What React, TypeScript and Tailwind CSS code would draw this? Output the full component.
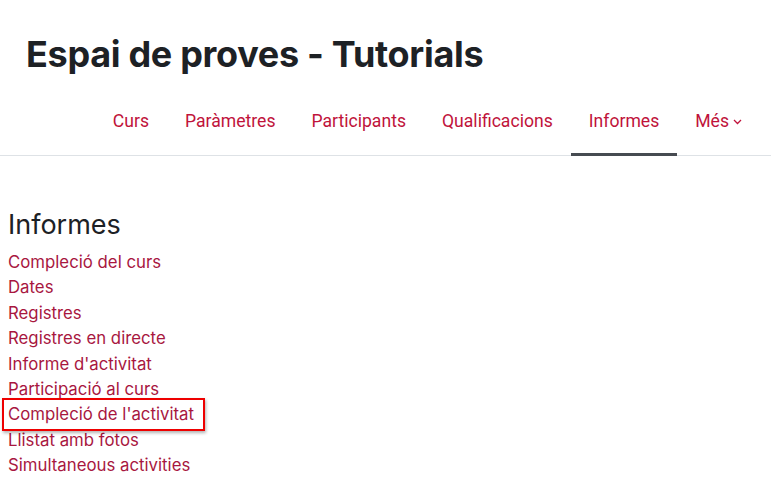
const tabs = ['Curs', 'Paràmetres', 'Participants', 'Qualificacions', 'Informes'];

const reports = [
  'Compleció del curs',
  'Dates',
  'Registres',
  'Registres en directe',
  "Informe d'activitat",
  'Participació al curs',
  "Compleció de l'activitat",
  'Llistat amb fotos',
  'Simultaneous activities',
];

export default function App() {
  return (
    <div className="w-[771px] h-[487px] bg-white overflow-hidden">
      {/* Header */}
      <div className="pl-[26px] pt-[30px]">
        <h1 className="text-[36px] leading-[48px] font-bold tracking-[-0.3px] text-[#1d2125] [font-family:Inter,sans-serif]">
          Espai de proves - Tutorials
        </h1>
      </div>

      {/* Secondary nav */}
      <nav className="mt-[19px] border-b border-[#dee2e6] flex justify-end pr-[13px]">
        {tabs.map((t) => (
          <a
            key={t}
            className={`px-[18px] h-[59px] pt-[12px] leading-[24px] text-[17.6px] text-[#c0133b] [font-family:Roboto,sans-serif] border-b-[3px] -mb-px ${
              t === 'Informes' ? 'border-[#464b51]' : 'border-transparent'
            }`}
          >
            {t}
          </a>
        ))}
        <a className="pl-[18px] pr-[16px] h-[59px] pt-[12px] leading-[24px] flex items-start gap-[4px] text-[17.6px] text-[#c0133b] [font-family:Roboto,sans-serif] border-b-[3px] border-transparent -mb-px">
          Més
          <svg className="mt-[10px]" width="9" height="6" viewBox="0 0 9 6" fill="none" stroke="#c0133b" strokeWidth="1.3">
            <path d="M1 1l3.5 3.5L8 1" />
          </svg>
        </a>
      </nav>

      {/* Content */}
      <div className="pl-[8px] pt-[51px] [font-family:Inter,sans-serif]">
        <h2 className="text-[27px] leading-[36px] text-[#1d2125] font-normal mb-[7px]">Informes</h2>
        <ul className="flex flex-col">
          {reports.map((r) => (
            <li key={r} className="h-[25.4px] flex items-center">
              {r === "Compleció de l'activitat" ? (
                <span className="relative text-[16.8px] text-[#a8173f]">
                  {r}
                  <span className="absolute left-[-6px] right-[-11px] top-[-4px] bottom-[-3px] border-2 border-[#ee0000] shadow-[1px_2px_3px_rgba(0,0,0,0.3)]" />
                </span>
              ) : (
                <a className="text-[16.8px] text-[#a8173f]">{r}</a>
              )}
            </li>
          ))}
        </ul>
      </div>
    </div>
  );
}
